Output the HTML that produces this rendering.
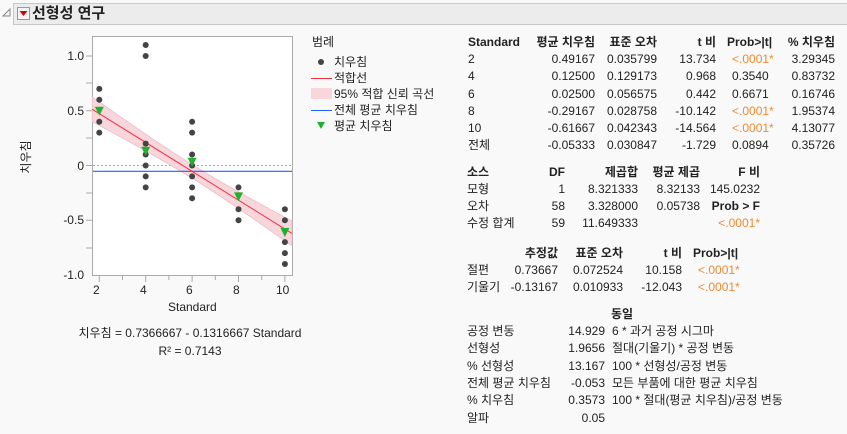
<!DOCTYPE html>
<html><head><meta charset="utf-8"><style>
body{margin:0;width:847px;height:434px;background:#f9f9f9;font-family:"Liberation Sans","Noto Sans CJK KR",sans-serif;font-size:12px;color:#222;position:relative;overflow:hidden}
.t{position:absolute;white-space:nowrap;line-height:14px}
.r{text-align:right}
.b{font-weight:bold}
.o{color:#f08a30}
</style></head><body>
<div style="position:absolute;left:13px;top:3px;width:840px;height:20px;background:#ececec;border:1px solid #c8c8c8"></div>
<svg style="position:absolute;left:0;top:0" width="847" height="434">
<path d="M3 16 L10 9 L10 16 Z" fill="none" stroke="#888"/>
<rect x="17.5" y="7.5" width="12" height="12" fill="#f4f4f4" stroke="#999"/>
<path d="M19.5 11 L27.5 11 L23.5 16 Z" fill="#d00"/>
<rect x="92.5" y="36.5" width="200" height="239" fill="#fff" stroke="#aaa"/>
<g stroke="#aaa">
<line x1="86" y1="56" x2="92" y2="56"/><line x1="86" y1="83" x2="92" y2="83"/><line x1="86" y1="110.75" x2="92" y2="110.75"/><line x1="86" y1="138" x2="92" y2="138"/><line x1="86" y1="165.5" x2="92" y2="165.5"/><line x1="86" y1="193" x2="92" y2="193"/><line x1="86" y1="220.25" x2="92" y2="220.25"/><line x1="86" y1="248" x2="92" y2="248"/>
<line x1="99.3" y1="276" x2="99.3" y2="282"/><line x1="122.5" y1="276" x2="122.5" y2="280"/><line x1="145.7" y1="276" x2="145.7" y2="282"/><line x1="168.9" y1="276" x2="168.9" y2="280"/><line x1="192.1" y1="276" x2="192.1" y2="282"/><line x1="215.3" y1="276" x2="215.3" y2="280"/><line x1="238.5" y1="276" x2="238.5" y2="282"/><line x1="261.7" y1="276" x2="261.7" y2="280"/><line x1="284.9" y1="276" x2="284.9" y2="282"/>
</g>
<line x1="93" y1="165.5" x2="292" y2="165.5" stroke="#aaa" stroke-dasharray="2,2"/>
<polygon points="92.3,97 122.5,118.2 145.7,134.2 168.9,149.7 192.1,164.6 215.3,178.6 238.5,191.9 261.7,204.7 291.9,221 291.9,245.7 261.7,224.5 238.5,208.5 215.3,193 192.1,178.1 168.9,164.1 145.7,150.8 122.5,138 92.3,121.7" fill="#f9d6dc" stroke="#e8c0c6" stroke-width="0.8"/>
<line x1="93" y1="171.3" x2="292" y2="171.3" stroke="#2060ff" stroke-width="1.2"/>
<line x1="92.3" y1="109.3" x2="291.9" y2="233.4" stroke="#f03040" stroke-width="1"/>
<g fill="#444">
<circle cx="99.3" cy="88.9" r="3"/><circle cx="99.3" cy="99.8" r="3"/><circle cx="99.3" cy="121.7" r="3"/><circle cx="99.3" cy="132.65" r="3"/>
<circle cx="145.7" cy="45" r="3"/><circle cx="145.7" cy="56" r="3"/><circle cx="145.7" cy="143.6" r="3"/><circle cx="145.7" cy="154.5" r="3"/><circle cx="145.7" cy="165.5" r="3"/><circle cx="145.7" cy="176.4" r="3"/><circle cx="145.7" cy="187.4" r="3"/>
<circle cx="192.1" cy="121.7" r="3"/><circle cx="192.1" cy="132.65" r="3"/><circle cx="192.1" cy="154.5" r="3"/><circle cx="192.1" cy="165.5" r="3"/><circle cx="192.1" cy="176.4" r="3"/><circle cx="192.1" cy="187.4" r="3"/><circle cx="192.1" cy="198.3" r="3"/>
<circle cx="238.5" cy="187.4" r="3"/><circle cx="238.5" cy="209.3" r="3"/><circle cx="238.5" cy="220.2" r="3"/>
<circle cx="284.9" cy="209.3" r="3"/><circle cx="284.9" cy="220.2" r="3"/><circle cx="284.9" cy="242.1" r="3"/><circle cx="284.9" cy="253.1" r="3"/><circle cx="284.9" cy="264" r="3"/>
</g>
<g fill="#22b030">
<path d="M94.8 106.7 L103.8 106.7 L99.3 115.7Z"/><path d="M141.2 146.8 L150.2 146.8 L145.7 155.8Z"/><path d="M187.6 157.8 L196.6 157.8 L192.1 166.8Z"/><path d="M234 192.4 L243 192.4 L238.5 201.4Z"/><path d="M280.4 228 L289.4 228 L284.9 237Z"/>
</g>
<circle cx="321" cy="62" r="3" fill="#444"/>
<line x1="311" y1="78.5" x2="332" y2="78.5" stroke="#f03040"/>
<rect x="311" y="88" width="21" height="11" fill="#f9d6dc"/>
<line x1="311" y1="110.5" x2="332" y2="110.5" stroke="#2060ff"/>
<path d="M317 122 L325 122 L321 129Z" fill="#22b030"/>
</svg>
<div class="t" style="left:32px;top:4px;font-size:15px;line-height:20px;font-weight:bold">선형성 연구</div>
<div class="t r" style="left:40px;width:44px;top:49px">1.0</div>
<div class="t r" style="left:40px;width:44px;top:104px">0.5</div>
<div class="t r" style="left:40px;width:44px;top:159px">0</div>
<div class="t r" style="left:40px;width:44px;top:213px">-0.5</div>
<div class="t r" style="left:40px;width:44px;top:268px">-1.0</div>
<div class="t" style="left:93px;top:283px">2</div><div class="t" style="left:140px;top:283px">4</div><div class="t" style="left:186px;top:283px">6</div><div class="t" style="left:233px;top:283px">8</div><div class="t" style="left:276px;top:283px">10</div>
<div class="t" style="left:168px;top:300px">Standard</div>
<div class="t" style="left:4px;top:150px;transform:rotate(-90deg);width:44px;text-align:center">치우침</div>
<div class="t" style="left:40px;width:300px;text-align:center;top:326px">치우침 = 0.7366667 - 0.1316667 Standard</div>
<div class="t" style="left:40px;width:300px;text-align:center;top:344px">R² = 0.7143</div>
<div class="t" style="left:312px;top:35px">범례</div>
<div class="t" style="left:334px;top:55px">치우침</div>
<div class="t" style="left:334px;top:71px">적합선</div>
<div class="t" style="left:334px;top:87px">95% 적합 신뢰 곡선</div>
<div class="t" style="left:334px;top:103px">전체 평균 치우침</div>
<div class="t" style="left:334px;top:119px">평균 치우침</div>

<div style="position:absolute;left:0;top:35px">
<div class="t b" style="left:468px;top:0">Standard</div>
<div class="t b r" style="left:495px;width:100px;top:0">평균 치우침</div>
<div class="t b r" style="left:597px;width:60px;top:0">표준 오차</div>
<div class="t b r" style="left:660px;width:56px;top:0">t 비</div>
<div class="t b" style="left:727px;top:0">Prob&gt;|t|</div>
<div class="t b r" style="left:775px;width:60px;top:0">% 치우침</div>
</div>
<div style="position:absolute;left:0;top:52px">
<div class="t" style="left:468px;top:0">2</div><div class="t r" style="left:495px;width:100px;top:0">0.49167</div><div class="t r" style="left:597px;width:60px;top:0">0.035799</div><div class="t r" style="left:660px;width:56px;top:0">13.734</div><div class="t o" style="left:732px;top:0">&lt;.0001*</div><div class="t r" style="left:775px;width:60px;top:0">3.29345</div>
<div class="t" style="left:468px;top:17px">4</div><div class="t r" style="left:495px;width:100px;top:17px">0.12500</div><div class="t r" style="left:597px;width:60px;top:17px">0.129173</div><div class="t r" style="left:660px;width:56px;top:17px">0.968</div><div class="t" style="left:732px;top:17px">0.3540</div><div class="t r" style="left:775px;width:60px;top:17px">0.83732</div>
<div class="t" style="left:468px;top:35px">6</div><div class="t r" style="left:495px;width:100px;top:35px">0.02500</div><div class="t r" style="left:597px;width:60px;top:35px">0.056575</div><div class="t r" style="left:660px;width:56px;top:35px">0.442</div><div class="t" style="left:732px;top:35px">0.6671</div><div class="t r" style="left:775px;width:60px;top:35px">0.16746</div>
<div class="t" style="left:468px;top:52px">8</div><div class="t r" style="left:495px;width:100px;top:52px">-0.29167</div><div class="t r" style="left:597px;width:60px;top:52px">0.028758</div><div class="t r" style="left:660px;width:56px;top:52px">-10.142</div><div class="t o" style="left:732px;top:52px">&lt;.0001*</div><div class="t r" style="left:775px;width:60px;top:52px">1.95374</div>
<div class="t" style="left:468px;top:69px">10</div><div class="t r" style="left:495px;width:100px;top:69px">-0.61667</div><div class="t r" style="left:597px;width:60px;top:69px">0.042343</div><div class="t r" style="left:660px;width:56px;top:69px">-14.564</div><div class="t o" style="left:732px;top:69px">&lt;.0001*</div><div class="t r" style="left:775px;width:60px;top:69px">4.13077</div>
<div class="t" style="left:468px;top:86px">전체</div><div class="t r" style="left:495px;width:100px;top:86px">-0.05333</div><div class="t r" style="left:597px;width:60px;top:86px">0.030847</div><div class="t r" style="left:660px;width:56px;top:86px">-1.729</div><div class="t" style="left:732px;top:86px">0.0894</div><div class="t r" style="left:775px;width:60px;top:86px">0.35726</div>
</div>

<div style="position:absolute;left:0;top:165px">
<div class="t b" style="left:467px;top:0">소스</div><div class="t b r" style="left:530px;width:35px;top:0">DF</div><div class="t b r" style="left:570px;width:68px;top:0">제곱합</div><div class="t b r" style="left:640px;width:60px;top:0">평균 제곱</div><div class="t b r" style="left:700px;width:60px;top:0">F 비</div>
<div class="t" style="left:467px;top:17px">모형</div><div class="t r" style="left:530px;width:35px;top:17px">1</div><div class="t r" style="left:570px;width:68px;top:17px">8.321333</div><div class="t r" style="left:640px;width:60px;top:17px">8.32133</div><div class="t r" style="left:700px;width:60px;top:17px">145.0232</div>
<div class="t" style="left:467px;top:34px">오차</div><div class="t r" style="left:530px;width:35px;top:34px">58</div><div class="t r" style="left:570px;width:68px;top:34px">3.328000</div><div class="t r" style="left:640px;width:60px;top:34px">0.05738</div><div class="t b r" style="left:700px;width:60px;top:34px">Prob &gt; F</div>
<div class="t" style="left:467px;top:51px">수정 합계</div><div class="t r" style="left:530px;width:35px;top:51px">59</div><div class="t r" style="left:570px;width:68px;top:51px">11.649333</div><div class="t o r" style="left:700px;width:60px;top:51px">&lt;.0001*</div>
</div>

<div style="position:absolute;left:0;top:246px">
<div class="t b r" style="left:498px;width:60px;top:0">추정값</div><div class="t b r" style="left:563px;width:60px;top:0">표준 오차</div><div class="t b r" style="left:630px;width:52px;top:0">t 비</div><div class="t b" style="left:693px;top:0">Prob&gt;|t|</div>
<div class="t" style="left:467px;top:17px">절편</div><div class="t r" style="left:498px;width:60px;top:17px">0.73667</div><div class="t r" style="left:563px;width:60px;top:17px">0.072524</div><div class="t r" style="left:630px;width:52px;top:17px">10.158</div><div class="t o" style="left:698px;top:17px">&lt;.0001*</div>
<div class="t" style="left:467px;top:34px">기울기</div><div class="t r" style="left:498px;width:60px;top:34px">-0.13167</div><div class="t r" style="left:563px;width:60px;top:34px">0.010933</div><div class="t r" style="left:630px;width:52px;top:34px">-12.043</div><div class="t o" style="left:698px;top:34px">&lt;.0001*</div>
</div>

<div style="position:absolute;left:0;top:307px">
<div class="t b" style="left:611px;top:0">동일</div>
<div class="t" style="left:467px;top:17px">공정 변동</div><div class="t r" style="left:545px;width:60px;top:17px">14.929</div><div class="t" style="left:612px;top:17px">6 * 과거 공정 시그마</div>
<div class="t" style="left:467px;top:34px">선형성</div><div class="t r" style="left:545px;width:60px;top:34px">1.9656</div><div class="t" style="left:612px;top:34px">절대(기울기) * 공정 변동</div>
<div class="t" style="left:467px;top:52px">% 선형성</div><div class="t r" style="left:545px;width:60px;top:52px">13.167</div><div class="t" style="left:612px;top:52px">100 * 선형성/공정 변동</div>
<div class="t" style="left:467px;top:69px">전체 평균 치우침</div><div class="t r" style="left:545px;width:60px;top:69px">-0.053</div><div class="t" style="left:612px;top:69px">모든 부품에 대한 평균 치우침</div>
<div class="t" style="left:467px;top:86px">% 치우침</div><div class="t r" style="left:545px;width:60px;top:86px">0.3573</div><div class="t" style="left:612px;top:86px">100 * 절대(평균 치우침)/공정 변동</div>
<div class="t" style="left:467px;top:104px">알파</div><div class="t r" style="left:545px;width:60px;top:104px">0.05</div>
</div>
</body></html>
